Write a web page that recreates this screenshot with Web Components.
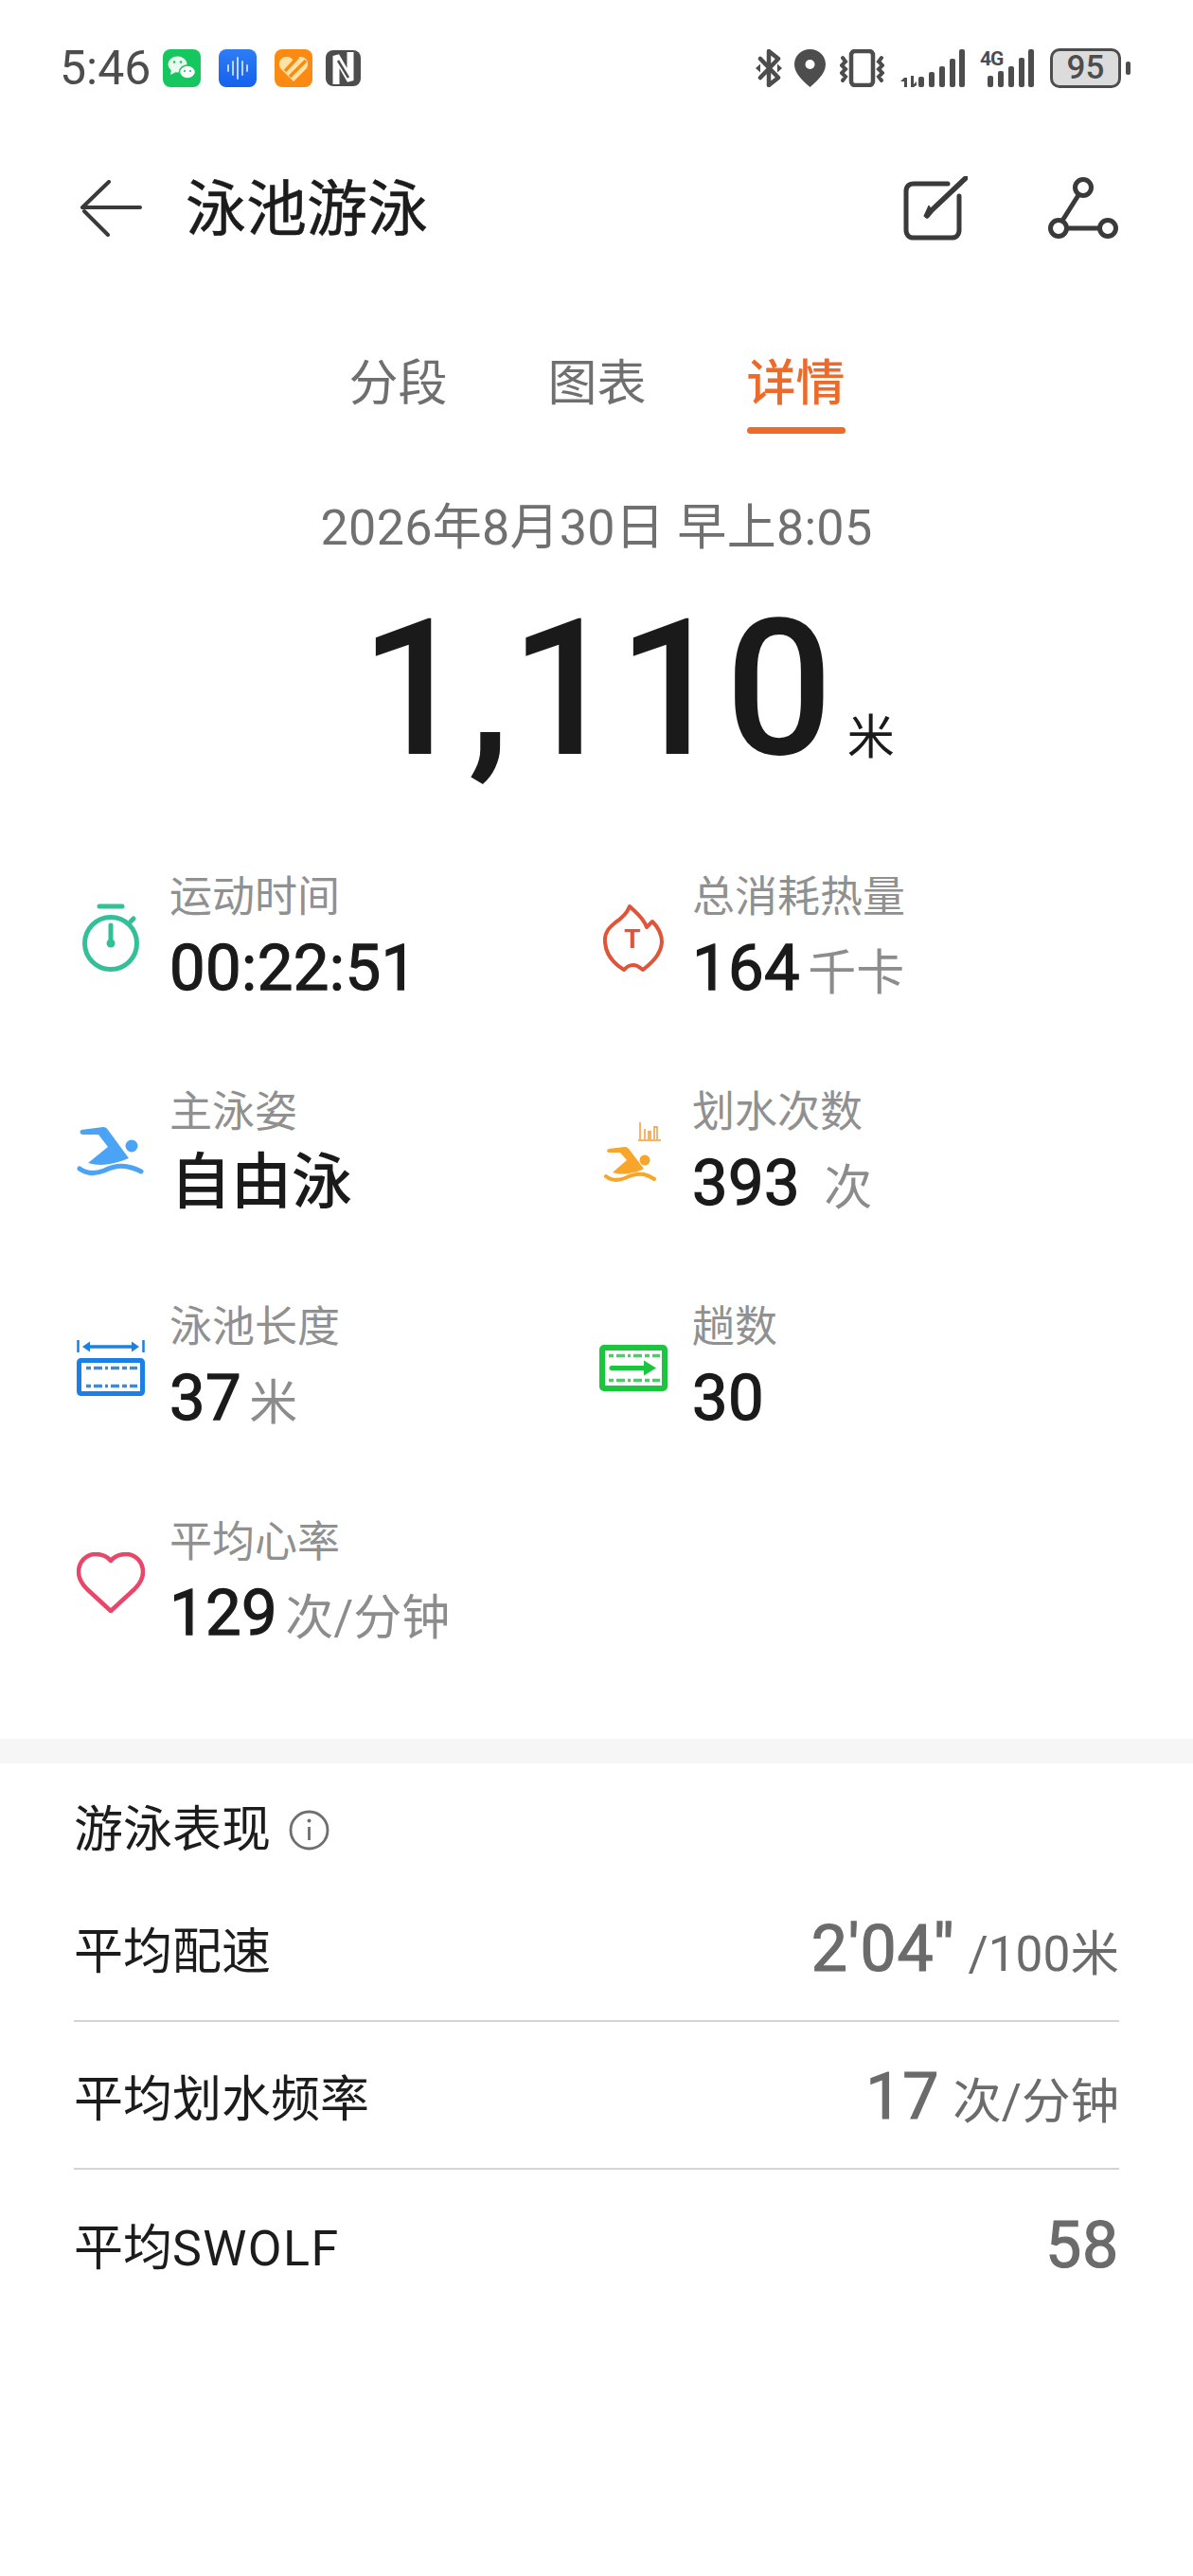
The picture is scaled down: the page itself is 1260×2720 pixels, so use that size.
<!DOCTYPE html>
<html lang="zh">
<head>
<meta charset="utf-8">
<title>泳池游泳</title>
<style>
  html, body { margin: 0; padding: 0; background: #fff; }
  body { width: 1260px; font-family: Roboto, "Noto Sans CJK SC", sans-serif; color: #1a1a1a; }
  svg { display: block; }
</style>
</head>
<body>

<status-bar time="5:46"></status-bar>
<title-bar title="泳池游泳"></title-bar>
<tab-bar></tab-bar>
<summary-head date="2026年8月30日 早上8:05" distance="1,110" unit="米"></summary-head>

<metric-grid>
  <metric-item label="运动时间" value="00:22:51">
    <svg slot="icon" width="62" height="72" viewBox="0 0 62 72" fill="none" stroke="#33bf97" stroke-width="5" stroke-linecap="round">
      <path d="M19 3H43"/>
      <circle cx="31" cy="42" r="27.5"/>
      <path d="M31 23V37"/>
      <circle cx="31" cy="42" r="4.5" fill="#33bf97" stroke="none"/>
      <path d="M52 19l3-3"/>
    </svg>
  </metric-item>
  <metric-item label="总消耗热量" value="164" unit="千卡">
    <svg slot="icon" width="64" height="72" viewBox="0 0 64 72" fill="none" stroke="#e0553a" stroke-width="4" stroke-linejoin="round">
      <path d="M28 3C34 9 42 14 46 25C48 23 50 21 52 19C58 25 62 33 62 41C61 54 51 63 42 70C38 67 36 65 32 65C27 65 25 67 22 70C12 64 3 54 2 41C1 30 7 25 13 20C19 16 25 11 28 3Z"/>
      <text x="31" y="47" font-family="Roboto, sans-serif" font-size="28" font-weight="700" fill="#e0553a" stroke="none" text-anchor="middle">T</text>
    </svg>
  </metric-item>
  <metric-item label="主泳姿" value="自由泳" cjk>
    <svg slot="icon" width="72" height="54" viewBox="0 0 72 54" fill="#4ba3f5">
      <path d="M5 3L28 0C30 0 32 1 33 3L55 33C47 36 44 37 40 38C32 40 22 41 12 38L33 21L23 8L6 8C3 7 3 4 5 3Z"/>
      <circle cx="58" cy="20" r="6.5"/>
      <path d="M3 44C11 50 19 50 29 46C39 41 46 40 54 42C60 43 64 45 68 47" fill="none" stroke="#4ba3f5" stroke-width="5" stroke-linecap="round"/>
    </svg>
  </metric-item>
  <metric-item label="划水次数" value="393" unit="次" wide-unit>
    <svg slot="icon" width="62" height="66" viewBox="0 0 62 66" fill="#f8a52c">
      <g fill="none" stroke="#f2ad5c" stroke-width="1.8">
        <path d="M36 20H60"/><path d="M38 19V1"/><path d="M43 19V8"/><path d="M47 19V11H49V19"/><path d="M53 19V6H56V19"/>
      </g>
      <path d="M5 29L22 27C24 27 25 28 26 29L42 50C36 53 33 54 30 54C24 56 16 56 9 54L24 41L17 33L5 33C2 32 3 30 5 29Z"/>
      <circle cx="43" cy="41" r="5.5"/>
      <path d="M2 58C8 63 14 63 22 60C30 56 35 55 42 56C47 57 50 59 53 61" fill="none" stroke="#f8a52c" stroke-width="4" stroke-linecap="round"/>
    </svg>
  </metric-item>
  <metric-item label="泳池长度" value="37" unit="米">
    <svg slot="icon" width="72" height="60" viewBox="0 0 72 60" fill="none" stroke="#1a80e6">
      <path d="M1.500 1V14M70.500 1V14" stroke-width="2.500"/>
      <path d="M9 8H63" stroke-width="3.500"/>
      <path d="M6 8L14 2.500V13.500ZM66 8L58 2.500V13.500Z" fill="#1a80e6" stroke="none"/>
      <rect x="2.500" y="22.500" width="67" height="35" rx="2" stroke-width="5"/>
      <path d="M10 30.500H64M10 49.500H64" stroke="#3d8ad6" stroke-width="3.500" stroke-dasharray="5 3 9 3 3 3 9 3"/>
    </svg>
  </metric-item>
  <metric-item label="趟数" value="30">
    <svg slot="icon" width="72" height="49" viewBox="0 0 72 49" fill="none" stroke="#1bc53e">
      <rect x="3" y="3" width="66" height="43" rx="2" stroke-width="6"/>
      <path d="M10 11.500H64M10 37.500H64" stroke="#52c96c" stroke-width="3.500" stroke-dasharray="5 3 9 3 3 3 9 3"/>
      <path d="M13 24.500H50" stroke-width="5" stroke-linecap="round"/>
      <path d="M47 16.500L60 24.500L47 32.500Z" fill="#1bc53e" stroke="none"/>
    </svg>
  </metric-item>
  <metric-item label="平均心率" value="129" unit="次/分钟">
    <svg slot="icon" width="72" height="64" viewBox="0 0 72 64" fill="none" stroke="#e8476a" stroke-width="4.5" stroke-linejoin="round">
      <path d="M36 9C31 3 25 2 20 2C10 2 2 10 2 21C2 29 6 34 11 39L36 62L61 39C66 34 70 29 70 21C70 10 62 2 52 2C47 2 41 3 36 9Z"/>
    </svg>
  </metric-item>
</metric-grid>

<perf-section heading="游泳表现">
  <perf-row label="平均配速" value="2'04''" unit="/100米"></perf-row>
  <perf-row label="平均划水频率" value="17" unit="次/分钟"></perf-row>
  <perf-row label="平均SWOLF" value="58" last></perf-row>
</perf-section>

<script>
const CJK = `Roboto, "Noto Sans CJK SC", sans-serif`;

class StatusBar extends HTMLElement {
  connectedCallback() {
    this.attachShadow({ mode: "open" }).innerHTML = `
      <style>
        :host { display: flex; align-items: center; height: 144px; padding: 0 67px 0 63px; box-sizing: border-box; color: #4d4d4d; font-family: ${CJK}; }
        .time { font-size: 50px; line-height: 1; width: 109px; }
        .apps, .sys { display: flex; align-items: center; }
        .apps { gap: 19px; }
        .sys { margin-left: auto; gap: 16px; }
        .bt { margin-right: -3px; }
        .loc { margin-right: -1px; }
        .vib { margin-right: -1px; }
        .batt { position: relative; width: 75px; height: 42px; box-sizing: border-box; border: 3px solid #4d4d4d; border-radius: 10px; background: #dcdcdc; font-size: 35px; font-weight: 500; line-height: 36px; text-align: center; margin-right: 9px; }
        .batt::after { content: ""; position: absolute; right: -13px; top: 11px; width: 5px; height: 14px; border-radius: 2px; background: #4d4d4d; }
        .four-g { position: relative; width: 57px; height: 40px; margin-right: 1px; }
        .four-g span { position: absolute; left: 0; top: 0; font-size: 21px; font-weight: 700; line-height: 21px; letter-spacing: -1px; }
      </style>
      <span class="time">${this.getAttribute("time")}</span>
      <div class="apps">
        <svg width="40" height="40" viewBox="0 0 40 40"><rect width="40" height="40" rx="8" fill="#16c65f"/><ellipse cx="15.500" cy="16" rx="10" ry="8.500" fill="#e9fbf0"/><path d="M9 21l-1 6 6-3z" fill="#e9fbf0"/><ellipse cx="26" cy="24" rx="8.500" ry="7" fill="#fff" stroke="#16c65f" stroke-width="1.500"/><circle cx="12" cy="13.500" r="1.300" fill="#16c65f"/><circle cx="19" cy="13.500" r="1.300" fill="#16c65f"/><circle cx="23" cy="23" r="1.100" fill="#16c65f"/><circle cx="29" cy="23" r="1.100" fill="#16c65f"/></svg>
        <svg width="40" height="40" viewBox="0 0 40 40"><defs><linearGradient id="bl" x1="0" y1="0" x2="0" y2="1"><stop offset="0" stop-color="#2e7df5"/><stop offset="1" stop-color="#1560ee"/></linearGradient></defs><rect width="40" height="40" rx="8" fill="url(#bl)"/><path d="M10 17v6M15 13v14M20 9v22M25 13v14M30 17v6" stroke="#cfe2ff" stroke-width="1.800" stroke-linecap="round"/></svg>
        <svg width="40" height="40" viewBox="0 0 40 40"><rect width="40" height="40" rx="8" fill="#fb8a12"/><path d="M20 34L6 20C3 14 6 8 13 8C16 8 18 9 20 12C22 9 24 8 27 8C34 8 37 14 34 20Z" fill="#ffe2a8"/><path d="M11 23L25 8M16 29L33 12" stroke="#fb8a12" stroke-width="3.500"/></svg>
      </div>
      <svg width="37" height="38" viewBox="0 0 37 38" style="margin-left:14px"><rect width="37" height="38" rx="8" fill="#4d4d4d"/><path d="M11 36V6L26 32V2" fill="none" stroke="#fff" stroke-width="7" stroke-linejoin="bevel"/><path d="M13 11L24 29" stroke="#4d4d4d" stroke-width="2.500"/></svg>
      <div class="sys">
        <svg class="bt" width="28" height="40" viewBox="0 0 28 40" fill="none" stroke="#4d4d4d" stroke-width="4.500" stroke-linejoin="round" stroke-linecap="round"><path d="M5 10L24 30L14 38V25M5 30L24 10L14 2V15"/><path d="M0 20L5 15.500V24.500ZM28 20L23 15.500V24.500Z" fill="#4d4d4d" stroke="none"/></svg>
        <svg class="loc" width="33" height="40" viewBox="0 0 33 40"><path d="M16.500 0C7 0 0 7 0 16C0 26 10 34 16.500 40C23 34 33 26 33 16C33 7 26 0 16.500 0Z" fill="#4d4d4d"/><circle cx="16.500" cy="16" r="5" fill="#fff"/></svg>
        <svg class="vib" width="47" height="40" viewBox="0 0 47 40" fill="none" stroke="#4d4d4d" stroke-width="4"><rect x="12" y="2" width="23" height="36" rx="4" stroke-width="4.500"/><path d="M3 9L6 13L2 17L6 21L2 25L6 29L3 33M44 9L41 13L45 17L41 21L45 25L41 29L44 33" stroke-linecap="round"/></svg>
        <svg width="70" height="40" viewBox="0 0 70 40" fill="#4d4d4d"><path d="M6 30H9V40H6ZM2 34l4-4v4zM13 28h3v9l3-3v4l-3 2h-3z"/><rect x="21" y="29" width="6" height="11" rx="2"/><rect x="32" y="24" width="6" height="16" rx="2"/><rect x="43" y="18" width="6" height="22" rx="2"/><rect x="54" y="10" width="6" height="30" rx="2"/><rect x="64" y="0" width="6" height="40" rx="2"/></svg>
        <div class="four-g"><span>4G</span><svg width="57" height="40" viewBox="0 0 57 40" fill="#4d4d4d"><rect x="8" y="28" width="6" height="12" rx="2"/><rect x="19" y="23" width="6" height="17" rx="2"/><rect x="30" y="18" width="6" height="22" rx="2"/><rect x="41" y="9" width="6" height="31" rx="2"/><rect x="51" y="0" width="6" height="40" rx="2"/></svg></div>
        <div class="batt">95</div>
      </div>`;
  }
}
customElements.define("status-bar", StatusBar);

class TitleBar extends HTMLElement {
  connectedCallback() {
    this.attachShadow({ mode: "open" }).innerHTML = `
      <style>
        :host { display: flex; align-items: center; height: 152px; padding: 0 79px 0 84px; box-sizing: border-box; }
        h1 { margin: 4px 0 0 46px; font: 400 64px/1 ${CJK}; color: #1c1c1c; -webkit-text-stroke: .5px #1c1c1c; }
        .acts { margin-left: auto; display: flex; align-items: center; gap: 85px; }
      </style>
      <svg width="66" height="60" viewBox="0 0 66 60" fill="none" stroke="#3a3a3a" stroke-width="4" stroke-linecap="round" stroke-linejoin="round"><path d="M31 2L3 29H64M5 33L30 58"/></svg>
      <h1>${this.getAttribute("title")}</h1>
      <div class="acts">
        <svg width="68" height="68" viewBox="0 0 68 68" fill="none" stroke="#3a3a3a" stroke-width="5" stroke-linejoin="round" stroke-linecap="round"><path d="M47 8H11C6 8 3 11 3 16V57C3 62 6 65 11 65H51C56 65 59 62 59 57V21"/><path d="M66 2L30 36L25 42" stroke-width="5.500"/><path d="M30 36L27 31L22 42Z" fill="#3a3a3a" stroke-width="1"/></svg>
        <svg width="74" height="66" viewBox="0 0 74 66" fill="none" stroke="#3a3a3a" stroke-width="5"><circle cx="37" cy="11" r="8.500"/><circle cx="11" cy="54" r="8.500"/><circle cx="63" cy="54" r="8.500"/><path d="M32 19L15 46M20 54H54"/></svg>
      </div>`;
  }
}
customElements.define("title-bar", TitleBar);

class TabBar extends HTMLElement {
  connectedCallback() {
    this.attachShadow({ mode: "open" }).innerHTML = `
      <style>
        :host { display: flex; justify-content: center; gap: 106px; height: 162px; padding-left: 1px; box-sizing: border-box; font: 400 52px/1 ${CJK}; color: #6f6f6f; }
        span { display: block; padding-top: 84px; width: 104px; height: 78px; white-space: nowrap; }
        .on { color: #ee6a2b; font-weight: 500; position: relative; }
        .on::after { content: ""; position: absolute; left: 0; right: 0; top: 155px; height: 7px; border-radius: 4px; background: #ee6a2b; }
      </style>
      <span>分段</span><span>图表</span><span class="on">详情</span>`;
  }
}
customElements.define("tab-bar", TabBar);

class SummaryHead extends HTMLElement {
  connectedCallback() {
    this.attachShadow({ mode: "open" }).innerHTML = `
      <style>
        :host { display: block; height: 460px; box-sizing: border-box; padding-top: 70px; font-family: ${CJK}; text-align: center; }
        .date { font-size: 52px; line-height: 60px; color: #707070; letter-spacing: .3px; }
        .big { display: flex; justify-content: center; align-items: baseline; margin-top: 38px; padding-left: 65px; color: #1a1a1a; }
        .num { font-size: 200px; font-weight: 500; line-height: 204px; }
        .unit { font-size: 50px; margin-left: 15px; line-height: 1; }
      </style>
      <div class="date">${this.getAttribute("date")}</div>
      <div class="big"><span class="num">${this.getAttribute("distance")}</span><span class="unit">${this.getAttribute("unit")}</span></div>`;
  }
}
customElements.define("summary-head", SummaryHead);

class MetricGrid extends HTMLElement {
  connectedCallback() {
    this.attachShadow({ mode: "open" }).innerHTML = `
      <style>
        :host { display: grid; grid-template-columns: 552px 552px; grid-auto-rows: 227px; padding-left: 78px; }
      </style>
      <slot></slot>`;
  }
}
customElements.define("metric-grid", MetricGrid);

class MetricItem extends HTMLElement {
  connectedCallback() {
    const unit = this.getAttribute("unit");
    const gap = this.hasAttribute("wide-unit") ? 25 : 8;
    this.attachShadow({ mode: "open" }).innerHTML = `
      <style>
        :host { display: flex; align-items: flex-start; font-family: ${CJK}; }
        .ico { width: 78px; height: 144px; display: flex; align-items: center; justify-content: center; flex: none; margin-right: 23px; }
        .label { font-size: 45px; line-height: 56px; color: #909090; white-space: nowrap; padding-top: 2px; }
        .val { display: flex; align-items: baseline; margin-top: 6px; height: 80px; line-height: 80px; white-space: nowrap; }
        .num { font-size: 67px; font-weight: 400; letter-spacing: .4px; -webkit-text-stroke: 1.3px #1a1a1a; color: #1a1a1a; }
        .num.cjk { font-size: 64px; font-weight: 500; letter-spacing: 0; -webkit-text-stroke: 0; padding-left: 1px; }
        .unit { font-size: 51px; color: #8c8c8c; margin-left: ${gap}px; }
      </style>
      <div class="ico"><slot name="icon"></slot></div>
      <div>
        <div class="label">${this.getAttribute("label")}</div>
        <div class="val"><span class="num${this.hasAttribute("cjk") ? " cjk" : ""}">${this.getAttribute("value")}</span>${unit ? `<span class="unit">${unit}</span>` : ""}</div>
      </div>`;
  }
}
customElements.define("metric-item", MetricItem);

class PerfSection extends HTMLElement {
  connectedCallback() {
    this.attachShadow({ mode: "open" }).innerHTML = `
      <style>
        :host { display: block; margin-top: 10px; border-top: 26px solid #f6f6f6; padding: 0 78px; font-family: ${CJK}; }
        .head { display: flex; align-items: flex-start; height: 117px; padding-top: 41px; font-size: 52px; line-height: 60px; color: #1c1c1c; box-sizing: border-box; }
        .head svg { margin: 8px 0 0 19px; }
      </style>
      <div class="head"><span>${this.getAttribute("heading")}</span>
        <svg width="43" height="43" viewBox="0 0 43 43" fill="none" stroke="#6e6e6e" stroke-width="2.800"><circle cx="21.500" cy="21.500" r="19.500"/><path d="M21.500 18V32"/><circle cx="21.500" cy="11.500" r="2" fill="#6e6e6e" stroke="none"/></svg>
      </div>
      <slot></slot>`;
  }
}
customElements.define("perf-section", PerfSection);

class PerfRow extends HTMLElement {
  connectedCallback() {
    const unit = this.getAttribute("unit");
    const label = this.getAttribute("label").replace(/[A-Z]+/, m => `<span class="lat">${m}</span>`);
    this.attachShadow({ mode: "open" }).innerHTML = `
      <style>
        :host { display: flex; align-items: center; justify-content: space-between; height: 156px; box-sizing: border-box; font-family: ${CJK}; }
        :host(:not([last])) { border-bottom: 2px solid #d4d4d4; }
        .l { font-size: 52px; color: #1c1c1c; }
        .lat { letter-spacing: 1.4px; }
        .r { display: flex; align-items: baseline; color: #6b6b6b; padding-top: 4px; }
        .n { font-size: 68px; font-weight: 400; letter-spacing: .8px; -webkit-text-stroke: 1.2px #6b6b6b; }
        .u { font-size: 51.500px; margin-left: 14px; }
      </style>
      <span class="l">${label}</span>
      <span class="r"><span class="n">${this.getAttribute("value")}</span>${unit ? `<span class="u">${unit}</span>` : ""}</span>`;
  }
}
customElements.define("perf-row", PerfRow);
</script>
</body>
</html>
